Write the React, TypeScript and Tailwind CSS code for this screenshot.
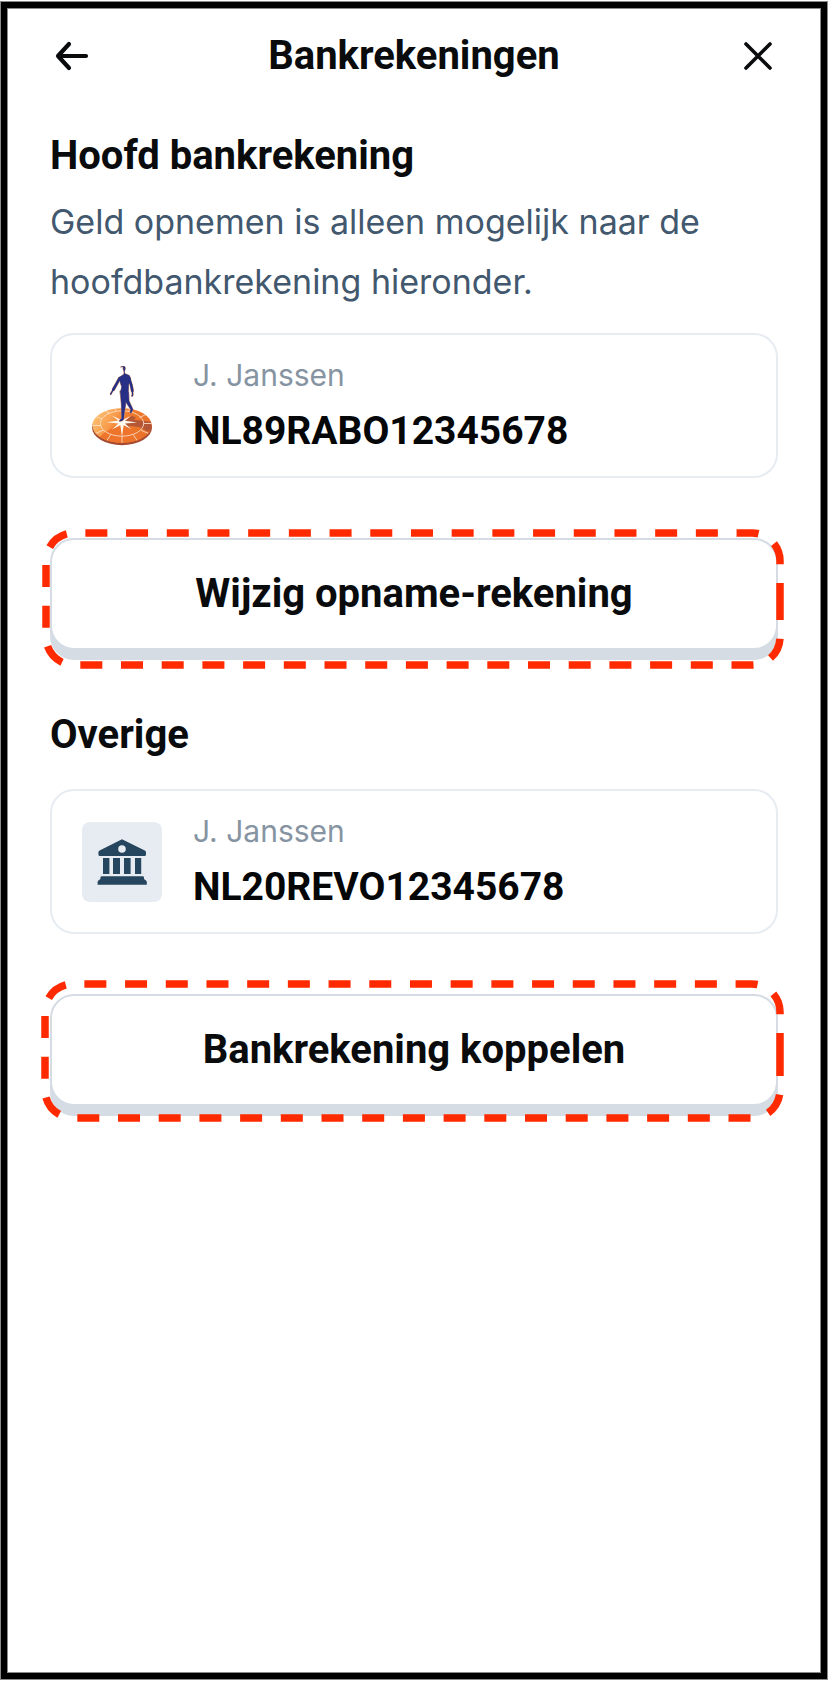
import type { ReactNode } from "react";

const heading = "font-['Roboto'] text-[40px] leading-[50px] font-bold text-[#090b0d]";

function ArrowLeftIcon() {
  return (
    <svg viewBox="0 0 40 40" className="size-10" fill="none" stroke="currentColor" strokeWidth="4.2" strokeLinecap="round" strokeLinejoin="round" aria-hidden="true">
      <path d="M36 20H8M19 8L8 20l11 12" />
    </svg>
  );
}

function CloseIcon() {
  return (
    <svg viewBox="0 0 40 40" className="size-10" fill="none" stroke="currentColor" strokeWidth="3.6" strokeLinecap="round" aria-hidden="true">
      <path d="M8 8l24 24M32 8L8 32" />
    </svg>
  );
}

// walking figure, drawn twice: once wider in orange for the rim
function Figure({ color, extra }: { color: string; extra: number }) {
  return (
    <g fill={color} stroke={color} strokeLinecap="round" strokeLinejoin="round">
      <path strokeWidth={1 + extra} d="M123 34q6-3 12 0 2 8-2 14l1 6 14 6 4 10-6 16-1 22q-2 8-4 10h-18q-2-8 2-24l-7-22 2-8 12-8v-8q-3-6-3-14z" />
      <path strokeWidth={8 + extra} fill="none" d="M119 68l-11 20-8 14M147 68l7 22 3 16" />
      <path strokeWidth={4 + extra} fill="none" d="M100 102l-6 10-2 4M157 106l1 12-2 3" />
      <path strokeWidth={1 + extra} d="M121 106h18l-2 40-4 26-2 20q-4 6-13 5l1-3 6-6-1-42z" />
      <path strokeWidth={1 + extra} d="M132 110h14l1 26 12 26-6 11-3-1 2-10-14-22z" />
    </g>
  );
}

function RaboLogo() {
  return (
    <svg viewBox="6 31.5 240 240" className="size-20 shrink-0" role="img" aria-label="Rabobank">
      <defs>
        <linearGradient id="disc" x1="0" y1="0.2" x2="1" y2="0.6">
          <stop offset="0" stopColor="#fdc576" />
          <stop offset="0.35" stopColor="#f79a4a" />
          <stop offset="0.5" stopColor="#f07a2c" />
          <stop offset="1" stopColor="#e8702a" />
        </linearGradient>
        <clipPath id="top">
          <ellipse cx="126" cy="210" rx="89" ry="52" />
        </clipPath>
      </defs>
      <ellipse cx="126" cy="216" rx="90" ry="53" fill="#a64a32" />
      <ellipse cx="126" cy="210" rx="89" ry="52" fill="url(#disc)" />
      <g clipPath="url(#top)">
        <path d="M126 200L70 234l-20 20 50 22 60-4 30-20z" fill="#ee732b" />
        <path d="M130 199l24-18 14 4-6 8 50 6 6 22-14 8-24-14-30-4-8 6z" fill="#a6503a" opacity="0.8" />
        <g stroke="#fbe3cf" strokeWidth="2.5" fill="none">
          <ellipse cx="126" cy="204" rx="65" ry="38" />
          <path d="M44 182l22 8M36 210h25M46 234l24-10M80 256l12-18M126 264v-22M172 256l-12-18M206 234l-24-10M216 204h-25M196 178l-18 8M76 166l12 8M104 158l4 8M150 158l-4 8" />
        </g>
      </g>
      <path
        d="M127 166l2 27 24-12-18 15 36 5-36 3 19 17-23-12-5 35-5-35-25 13 19-18-35-4 35-5-20-15 28 13z"
        fill="#fff8ef"
      />
      <Figure color="#f6b070" extra={2} />
      <Figure color="#272f86" extra={0} />
    </svg>
  );
}

function BankIcon() {
  return (
    <div className="size-20 shrink-0 rounded-lg bg-[#e7ecf3]">
      <svg viewBox="0 0 80 80" className="size-20" fill="#26465f" role="img" aria-label="Bank">
        <path
          fillRule="evenodd"
          d="M40 17.3L62.8 28.6q1.2.6 1.2 1.8v2q0 1.6-1.6 1.6H18q-1.6 0-1.6-1.6v-2q0-1.2 1.2-1.8zM40 23.2a3.8 3.8 0 100 7.6 3.8 3.8 0 000-7.6z"
        />
        <path d="M21 36h6.4v16H21zM31 36h7v16h-7zM42 36h6.6v16H42zM53 36h6.2v16H53z" />
        <path d="M20 54.2h40.6q1.4 0 1.4 1.4v1.4l2 1.4q.8.6.8 1.6v2.8H15.6V60q0-1 .8-1.6l2-1.4v-1.4q0-1.4 1.6-1.4z" />
      </svg>
    </div>
  );
}

function AccountCard({ icon, name, iban }: { icon: ReactNode; name: string; iban: string }) {
  return (
    <div className="flex items-center gap-[31px] rounded-3xl border-2 border-[#e7ecf2] px-[30px] py-[14px]">
      {icon}
      <div>
        <p className="text-[30px] leading-[52px] text-[#8694a2]">{name}</p>
        <p className="font-['Roboto'] text-[39px] leading-[61px] font-bold text-[#050607]">{iban}</p>
      </div>
    </div>
  );
}

function ActionButton({ children, outline }: { children: ReactNode; outline: ReactNode }) {
  return (
    <div className="relative mt-[60px]">
      <button
        type="button"
        className="h-28 w-full rounded-3xl border-2 border-[#d5dce4] bg-white font-['Roboto'] text-[40px] leading-[50px] font-bold text-[#090b0d] shadow-[0_10px_0_#d5dce4]"
      >
        {children}
      </button>
      {outline}
    </div>
  );
}

// dashed marker around a button, starts halfway down the right side
function Marker({ className, viewBox, d }: { className: string; viewBox: string; d: string }) {
  return (
    <div className={className}>
      <svg viewBox={viewBox} preserveAspectRatio="none" className="size-full" fill="none" aria-hidden="true">
        <path d={d} stroke="#ff2a00" strokeWidth="7.5" strokeDasharray="22 18.7" vectorEffect="non-scaling-stroke" />
      </svg>
    </div>
  );
}

export default function App() {
  return (
    <div className="flex min-h-screen flex-col bg-white px-px py-[2px] font-['Inter',sans-serif]">
      <main className="flex-1 border-[6px] border-black px-[43px] shadow-[0_0_0_1px_#8a8a8a,inset_0_0_0_1px_#8a8a8a]">
        <header className="flex h-24 items-center justify-between text-[#090b0d]">
          <button type="button" aria-label="Terug">
            <ArrowLeftIcon />
          </button>
          <h1 className={heading}>Bankrekeningen</h1>
          <button type="button" aria-label="Sluiten">
            <CloseIcon />
          </button>
        </header>

        <section className="pt-[27px]">
          <h2 className={heading}>Hoofd bankrekening</h2>
          <p className="mt-[11px] mb-[21px] text-[34px] leading-[60px] text-[#42586e]">
            Geld opnemen is alleen mogelijk naar de hoofdbankrekening hieronder.
          </p>
          <AccountCard icon={<RaboLogo />} name="J. Janssen" iban="NL89RABO12345678" />
          <ActionButton
            outline={
              <Marker
                className="pointer-events-none absolute -top-[9px] -right-[6px] -bottom-[19px] -left-[8px]"
                viewBox="0 0 742 140"
                d="M738 69V108A28 28 0 0 1 710 136H32A28 28 0 0 1 4 108V32A28 28 0 0 1 32 4H710A28 28 0 0 1 738 32Z"
              />
            }
          >
            Wijzig opname-rekening
          </ActionButton>
        </section>

        <section className="pt-[60px]">
          <h2 className={`${heading} mb-[29px]`}>Overige</h2>
          <AccountCard icon={<BankIcon />} name="J. Janssen" iban="NL20REVO12345678" />
          <ActionButton
            outline={
              <Marker
                className="pointer-events-none absolute -top-[14px] -right-[6px] -bottom-[16px] -left-[9px]"
                viewBox="0 0 743 142"
                d="M739 74V110A28 28 0 0 1 711 138H32A28 28 0 0 1 4 110V32A28 28 0 0 1 32 4H711A28 28 0 0 1 739 32Z"
              />
            }
          >
            Bankrekening koppelen
          </ActionButton>
        </section>
      </main>
    </div>
  );
}
